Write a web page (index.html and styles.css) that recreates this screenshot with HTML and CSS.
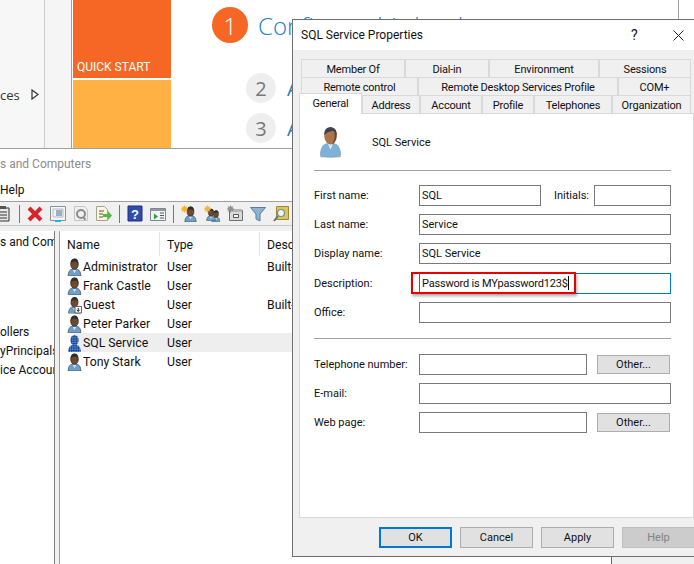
FILE: index.html
```html
<!DOCTYPE html>
<html lang="en">
<head>
  <meta charset="UTF-8" />
  <meta name="viewport" content="width=device-width, initial-scale=1" />
  <title>SQL Service Properties</title>
  <link rel="stylesheet" href="styles.css">
</head>
<body>

  <svg class="defs" width="0" height="0">
    <defs>
      <pattern id="dither" width="2" height="2" patternUnits="userSpaceOnUse">
        <rect width="2" height="2" fill="#2a5fb8"/>
        <rect width="1" height="1" fill="#12306e"/>
        <rect x="1" y="1" width="1" height="1" fill="#6f9fe0"/>
      </pattern>
      <symbol id="user" viewBox="0 0 16 20">
        <path d="M1 20c0-5 2-8 7-8s7 3 7 8z" fill="#6f9fc8" stroke="#2f4d68" stroke-width=".8"/>
        <path d="M6 13l2 4 2-4z" fill="#d6e6f2"/>
        <ellipse cx="8" cy="7" rx="4.2" ry="5.6" fill="#6d4a30" stroke="#2b2119" stroke-width=".8"/>
        <path d="M3.8 6C3.6 2 6 .6 8.4.6c2.4 0 4 1.800 3.800 5.400C10.800 3.800 6 3.600 3.800 6z" fill="#2f2f2f"/>
      </symbol>
      <symbol id="user-sel" viewBox="0 0 16 20">
        <path d="M1 20c0-5 2-8 7-8s7 3 7 8z" fill="url(#dither)"/>
        <ellipse cx="8" cy="7" rx="4.6" ry="6" fill="url(#dither)"/>
      </symbol>
      <symbol id="user-big" viewBox="0 0 24 32">
        <path d="M1 30c0-8 3-12 8-13h6c5 1 8 5 8 13-6 3-16 3-22 0z" fill="#7fb0d8"/>
        <path d="M9 17l3 7 3-7z" fill="#dcebf5"/>
        <path d="M1 30c4 2 18 2 22 0l-1 2H2z" fill="#8f9aa3"/>
        <ellipse cx="12" cy="10" rx="6.500" ry="8.500" fill="#a9754a"/>
        <path d="M15 2c3 2 4 6 3 10-1 4-3 6-5 7 4-4 4-11 2-17z" fill="#6d4729"/>
        <path d="M5.500 9C5 3 9 0 13 .5c4 .5 6 4 5.500 9-1-3-2-5-4-5-3 0-6 1-9 4.500z" fill="#3e4347"/>
      </symbol>
    </defs>
  </svg>

  <div class="desktop">

    <div class="server-manager">
      <div class="sm-nav">
        <span>ces</span>
        <svg class="arrow" viewBox="0 0 8 11"><path d="M1 1l6 4.500-6 4.500z" fill="#fff" stroke="#333" stroke-width="1.200"/></svg>
      </div>
      <div class="sm-strip"></div>
      <div class="tiles">
        <div class="tile-start">QUICK START</div>
        <div class="tile-new"></div>
      </div>
      <div class="steps">
        <div class="step-main">
          <span class="num-big">1</span>
          <span class="step-title">Configure this local server</span>
        </div>
        <div class="step"><span class="num">2</span><span class="step-text">Add roles and features</span></div>
        <div class="step"><span class="num">3</span><span class="step-text">Add other servers to manage</span></div>
      </div>
      <div class="sm-scroll"></div>
    </div>

    <div class="aduc">
      <div class="aduc-title">s and Computers</div>
      <div class="aduc-menu">Help</div>
      <div class="toolbar">
        <svg class="tool tool-first" viewBox="0 0 12 17"><path d="M-4 3h13v13H-4z" fill="#e8e8e8" stroke="#333"/><path d="M0 1h6v3H0z" fill="#555"/><path d="M-2 7h9M-2 10h9M-2 13h9" stroke="#333"/></svg>
        <span class="tool-sep"></span>
        <svg class="tool" viewBox="0 0 16 17"><path d="M2 3l12 12M14 3L2 15" stroke="#d8232a" stroke-width="4"/></svg>
        <svg class="tool" viewBox="0 0 16 17"><path d="M.5 1.500h15v14H.5z" fill="#f4f6f8" stroke="#8a8f96"/><path d="M3 4h10v8H3z" fill="#f0f4f8" stroke="#b4bcc4"/><path d="M6 6h6M6 8h6M6 10h6" stroke="#4d6a8a"/><path d="M5 15h6v2H5z" fill="#27b0e8"/></svg>
        <svg class="tool" viewBox="0 0 16 17"><path d="M1.500 1.500h10l3 3v11h-13z" fill="#f0f0f0" stroke="#c4c4c4"/><circle cx="8" cy="9" r="4" fill="none" stroke="#8c8c8c" stroke-width="2"/><path d="M9 12l4 1-1 3z" fill="#8c8c8c"/></svg>
        <svg class="tool" viewBox="0 0 16 17"><path d="M.5 1.500h8l3 3v11h-11z" fill="#fbf6dc" stroke="#a8a48c"/><path d="M3 6h5M3 9h4M3 12h4" stroke="#555"/><path d="M7 9h5V6l4 4.500-4 4.500v-3H7z" fill="#57b947"/></svg>
        <span class="tool-sep"></span>
        <svg class="tool" viewBox="0 0 16 17"><path d="M1 1h14v15H1z" fill="#2f4db0" stroke="#1c2f80"/><text x="8" y="13.500" class="tool-q">?</text></svg>
        <svg class="tool" viewBox="0 0 16 17"><path d="M.5 3.500h15v12H.5z" fill="#f2f2f2" stroke="#7d8790"/><path d="M1 4h14v2H1z" fill="#8d98a3"/><path d="M4 8.500l4 3-4 3z" fill="#2f9e44"/><path d="M10 8h4M10 10.500h4M10 13h4" stroke="#4d5966"/></svg>
        <span class="tool-sep"></span>
        <svg class="tool" viewBox="0 0 16 17"><use href="#user" x="3" y="1" width="13" height="16"/><path d="M3.500 0l1 2 2-1-1 2 2 1-2 1 1 2-2-1-1 2-1-2-2 1 1-2-2-1 2-1-1-2 2 1z" fill="#f7b32b"/></svg>
        <svg class="tool" viewBox="0 0 16 17"><use href="#user" x="7" y="5" width="10" height="12"/><use href="#user" x="2" y="3" width="10" height="13"/><path d="M3.500 0l1 2 2-1-1 2 2 1-2 1 1 2-2-1-1 2-1-2-2 1 1-2-2-1 2-1-1-2 2 1z" fill="#f7b32b"/></svg>
        <svg class="tool" viewBox="0 0 16 17"><path d="M2.500 5.500h13v10h-13z" fill="#d9d9d9" stroke="#6f6f6f"/><path d="M6 4h9v3H6z" fill="#b4b4b4"/><path d="M6.500 9.500h5v3h-5z" fill="#fafafa" stroke="#555"/><path d="M3.500 0l1 2 2-1-1 2 2 1-2 1 1 2-2-1-1 2-1-2-2 1 1-2-2-1 2-1-1-2 2 1z" fill="#8f8f8f"/></svg>
        <svg class="tool" viewBox="0 0 16 17"><path d="M.5 2.500h15L10 9v7l-4-2V9z" fill="#8fb3cf" stroke="#5a7c99"/></svg>
        <svg class="tool" viewBox="0 0 16 17"><path d="M3.500 1.500h12v13h-12z" fill="#dcc65a" stroke="#9c8a33"/><circle cx="8" cy="8" r="3.500" fill="#eef3f5" stroke="#7a8a94" stroke-width="1.200"/><path d="M5 11l-4 5" stroke="#6b6b6b" stroke-width="2"/></svg>
      </div>
      <div class="panes">
        <div class="tree">
          <div class="tree-top">s and Com</div>
          <div class="tree-low">ollers</div>
          <div class="tree-item">yPrincipals</div>
          <div class="tree-item">ice Accoun</div>
        </div>
        <div class="list">
          <div class="list-head">
            <span class="col">Name</span>
            <span class="col">Type</span>
            <span class="col">Description</span>
          </div>
          <div class="row"><svg class="row-icon"><use href="#user"/></svg><span class="col-name">Administrator</span><span class="col-type">User</span><span>Built-in account</span></div>
          <div class="row"><svg class="row-icon"><use href="#user"/></svg><span class="col-name">Frank Castle</span><span class="col-type">User</span></div>
          <div class="row"><svg class="row-icon" viewBox="0 0 16 18"><use href="#user"/><path d="M8.500 10.500h7v7h-7z" fill="#fff" stroke="#555"/><path d="M12 12v3.500M10.500 14l1.500 2 1.500-2" stroke="#222" fill="none"/></svg><span class="col-name">Guest</span><span class="col-type">User</span><span>Built-in account</span></div>
          <div class="row"><svg class="row-icon"><use href="#user"/></svg><span class="col-name">Peter Parker</span><span class="col-type">User</span></div>
          <div class="row row-selected"><svg class="row-icon"><use href="#user-sel"/></svg><span class="col-name">SQL Service</span><span class="col-type">User</span></div>
          <div class="row"><svg class="row-icon"><use href="#user"/></svg><span class="col-name">Tony Stark</span><span class="col-type">User</span></div>
        </div>
      </div>
    </div>

    <div class="dialog">
      <div class="dialog-title">
        <span class="dialog-name">SQL Service Properties</span>
        <span class="dialog-help">?</span>
        <svg class="dialog-close" viewBox="0 0 11 11"><path d="M.5.500l10 10M10.500.500l-10 10" stroke="#222" fill="none"/></svg>
      </div>

      <div class="tabs">
        <div class="tab-row tab-row-1">
          <span class="tab">Member Of</span><span class="tab">Dial-in</span><span class="tab">Environment</span><span class="tab">Sessions</span>
        </div>
        <div class="tab-row tab-row-2">
          <span class="tab">Remote control</span><span class="tab">Remote Desktop Services Profile</span><span class="tab">COM+</span>
        </div>
        <div class="tab-row tab-row-3">
          <span class="tab tab-active">General</span><span class="tab">Address</span><span class="tab">Account</span><span class="tab">Profile</span><span class="tab">Telephones</span><span class="tab">Organization</span>
        </div>
      </div>

      <div class="panel">
        <div class="panel-head">
          <svg class="big-icon"><use href="#user-big"/></svg>
          <span>SQL Service</span>
        </div>
        <hr class="sep">
        <div class="form form-top">
          <label>First name:</label>
          <div class="split">
            <div class="field field-first">SQL</div>
            <label class="initials">Initials:</label>
            <div class="field field-init"></div>
          </div>
          <label>Last name:</label>
          <div class="field">Service</div>
          <label>Display name:</label>
          <div class="field">SQL Service</div>
          <label class="label-desc">Description:</label>
          <div class="field field-focus">Password is MYpassword123$<span class="caret"></span><span class="redbox"></span></div>
          <label>Office:</label>
          <div class="field"></div>
        </div>
        <hr class="sep sep-second">
        <div class="form">
          <label>Telephone number:</label>
          <div class="split">
            <div class="field field-short"></div>
            <button class="btn btn-other">Other...</button>
          </div>
          <label>E-mail:</label>
          <div class="field"></div>
          <label>Web page:</label>
          <div class="split">
            <div class="field field-short"></div>
            <button class="btn btn-other">Other...</button>
          </div>
        </div>
      </div>

      <div class="dialog-foot">
        <button class="btn btn-foot btn-default">OK</button>
        <button class="btn btn-foot">Cancel</button>
        <button class="btn btn-foot">Apply</button>
        <button class="btn btn-foot btn-off">Help</button>
      </div>
    </div>

  </div>

</body>
</html>
```

FILE: styles.css
```css
body { margin: 0; background: #f0f0f0; font-family: Roboto, Arial, sans-serif; font-size: 11px; color: #111; }
.defs { position: absolute; }
.desktop { position: relative; width: 694px; height: 564px; overflow: hidden; }

/* server manager, behind everything */
.server-manager { display: flex; height: 148px; background: #fff; border-bottom: 1px solid #a0a0a0; }
.sm-nav {
  width: 44px; flex: none; background: #f7f7f7; border-right: 1px solid #ccc;
  padding-top: 86px; display: flex; gap: 11px; height: 62px;
  font-family: "Open Sans", sans-serif; font-size: 13px; color: #333;
}
.sm-nav span { line-height: 18px; }
.arrow { width: 8px; height: 11px; margin-top: 3px; flex: none; }
.sm-strip { width: 26px; flex: none; background: #f5f5f5; border-right: 1px solid #a0a0a0; }
.tiles { width: 98px; flex: none; margin-left: 1px; }
.tile-start {
  height: 78px; background: #f66725; color: #fff; font-size: 12px;
  box-sizing: border-box; padding: 60px 0 0 4px; margin-bottom: 2px;
}
.tile-new { height: 68px; background: #ffb243; }
.steps { flex: 1; padding-left: 41px; overflow: hidden; white-space: nowrap; font-family: "Open Sans", sans-serif; }
.step-main { display: flex; align-items: center; gap: 10px; height: 50px; }
.num-big {
  width: 36px; height: 36px; border-radius: 50%; background: #f66725; color: #fff;
  font-size: 24px; font-weight: 300; display: flex; align-items: center; justify-content: center;
}
.step-title { font-size: 24px; color: #1b80c8; font-weight: 300; }
.step { display: flex; align-items: center; gap: 11px; height: 40px; margin-left: 34px; }
.step-main + .step { margin-top: 18px; }
.num {
  width: 30px; height: 30px; border-radius: 50%; background: #eee; color: #777;
  font-size: 20px; display: flex; align-items: center; justify-content: center;
}
.step-text { font-size: 20px; color: #1b80c8; }
.sm-scroll { width: 15px; flex: none; border-left: 1px solid #a0a0a0; }

/* active directory window */
.aduc { position: absolute; left: 0; top: 149px; width: 612px; height: 415px; background: #fff; border-right: 1px solid #666; box-sizing: border-box; }
.aduc-title { height: 30px; line-height: 30px; color: #8c8c8c; font-size: 12px; }
.aduc-menu { height: 22px; line-height: 22px; font-size: 12px; }
.toolbar {
  display: flex; align-items: center; gap: 7px; height: 23px; background: #f0f0f0;
  border-top: 1px solid #a0a0a0; border-bottom: 1px solid #c8c8c8;
}
.tool { width: 16px; height: 17px; flex: none; }
.tool-first { width: 12px; }
.tool-sep { width: 1px; height: 18px; background: #777; flex: none; }
.tool-q { font-family: "Liberation Sans", sans-serif; font-size: 13px; font-weight: bold; fill: #fff; text-anchor: middle; }
.panes { display: flex; height: 338px; background: #f0f0f0; padding-top: 5px; gap: 4px; }
.tree { width: 55px; flex: none; background: #fff; border-right: 1px solid #808080; overflow: hidden; white-space: nowrap; font-size: 12px; box-sizing: border-box; }
.tree-top { margin-top: 2px; line-height: 18px; }
.tree-low { margin-top: 72px; line-height: 19px; }
.tree-item { line-height: 18.500px; }
.list { flex: 1; background: #fff; border-left: 1px solid #a0a0a0; font-size: 12.250px; }
.list-head { display: flex; height: 26px; align-items: center; }
.col { width: 100px; box-sizing: border-box; height: 24px; line-height: 26px; padding-left: 7px; border-right: 1px solid #e5e5e5; }
.col:last-child { border-right: none; }
.row { display: flex; align-items: center; height: 19px; white-space: nowrap; padding-left: 7px; }
.row-selected { background: linear-gradient(90deg, #fff 14px, #eeeeee 14px); }
.row-icon { width: 15px; height: 18px; flex: none; margin-right: 1px; }
.col-name { width: 84px; flex: none; }
.col-type { width: 100px; flex: none; }

/* properties dialog */
.dialog {
  position: absolute; left: 292px; top: 19px; width: 420px; height: 538px;
  background: #f0f0f0; border: 1px solid #6e6e6e; box-sizing: border-box;
}
.dialog-title { display: flex; align-items: center; height: 30px; background: #fff; padding-left: 8px; font-size: 12px; }
.dialog-name { width: 330px; }
.dialog-help { width: 42px; font-size: 14px; }
.dialog-close { width: 11px; height: 11px; }
.tabs { margin: 9px 0 0 6px; width: 395px; position: relative; z-index: 1; letter-spacing: -0.2px; }
.tab-row { display: grid; margin-left: 2px; width: 390px; height: 18px; }
.tab-row-1 { grid-template-columns: 104px 84px 110px 92px; }
.tab-row-2 { grid-template-columns: 117px 200px 73px; }
.tab-row-3 { grid-template-columns: 63px 58px 62px 52px 78px 79px; margin-left: 0; width: 392px; }
.tab {
  display: flex; align-items: center; justify-content: center; height: 18px; padding-top: 1px;
  border: 1px solid #d9d9d9; border-bottom: none; box-sizing: border-box; background: #f0f0f0;
  white-space: nowrap;
}
.tab-active { height: 21px; margin-top: -2px; padding-top: 0; padding-bottom: 2px; background: #fff; position: relative; z-index: 2; }
.panel {
  margin-left: 6px; width: 395px; height: 405px; background: #fff; border: 1px solid #d9d9d9;
  box-sizing: border-box; padding: 0 22px 0 14px;
}
.panel-head { display: flex; align-items: center; height: 56px; gap: 30px; padding-left: 5px; }
.big-icon { width: 23px; height: 32px; flex: none; }
.sep { height: 1px; border: none; background: #a0a0a0; margin: 0 0 14px; }
.sep-second { margin: 15px 0 15px; }
.form { display: grid; grid-template-columns: 105px 252px; row-gap: 8px; align-items: center; }
.form label { white-space: nowrap; }
.form .label-desc { margin-top: 1px; }
.split { display: flex; align-items: center; }
.field {
  height: 21px; line-height: 19px; border: 1px solid #7a7a7a; background: #fff; box-sizing: border-box;
  padding-left: 2px; white-space: nowrap;
}
.field-first { width: 122px; flex: none; }
.initials { margin: 0 auto 0 13px; }
.field-init { width: 77px; flex: none; }
.field-short { width: 168px; flex: none; }
.field-focus { border-color: #0078d7; position: relative; margin-top: 1px; letter-spacing: -0.2px; }
.caret { display: inline-block; width: 1px; height: 14px; background: #000; vertical-align: -3px; }
.redbox {
  position: absolute; left: -9px; top: -2px; width: 165px; height: 22px;
  border: 2px solid #e60000; box-sizing: border-box; box-shadow: 1px 2px 3px rgba(0,0,0,0.35);
}
.btn {
  font-family: inherit; font-size: 11px; color: #111; background: #e1e1e1;
  border: 1px solid #adadad; padding: 0; box-sizing: border-box;
}
.btn-other { width: 73px; height: 19px; margin-left: auto; margin-right: 1px; }
.dialog-foot { display: flex; gap: 8px; padding: 9px 0 0 86px; }
.btn-foot { width: 73px; height: 21px; flex: none; }
.btn-default { border: 2px solid #0078d7; }
.btn-off { background: #ccc; border-color: #bfbfbf; color: #838383; }
```
